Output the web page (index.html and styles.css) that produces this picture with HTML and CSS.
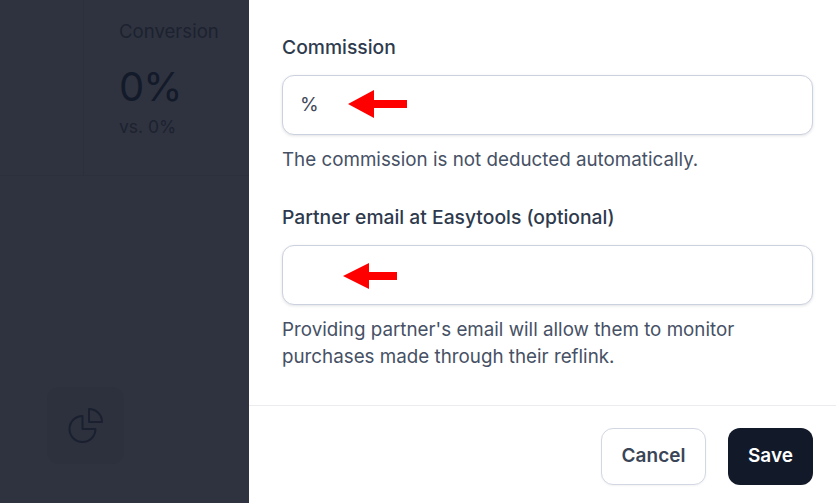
FILE: index.html
```html
<!DOCTYPE html>
<html lang="en">
<head>
<meta charset="utf-8">
<title>Commission</title>
<link rel="stylesheet" href="styles.css">
</head>
<body>
<div class="page">
  <aside class="backdrop">
    <section class="stats">
      <div class="stat-gap"></div>
      <div class="stat">
        <div class="stat-title">Conversion</div>
        <div class="stat-value">0%</div>
        <div class="stat-sub">vs. 0%</div>
      </div>
    </section>
    <div class="empty">
      <div class="empty-icon">
        <svg width="36" height="36" viewBox="0 0 36 36" fill="none" stroke="#1a2030" stroke-width="2" stroke-linejoin="round" stroke-linecap="round">
          <path d="M14.5 8A13 13 0 1 0 27.5 21H14.5z"/>
          <path d="M21 1A13 13 0 0 1 34 14H21z"/>
        </svg>
      </div>
    </div>
  </aside>
  <main class="panel">
    <form class="form">
      <div class="field">
        <label class="label">Commission</label>
        <div class="input"><span class="suffix">%</span>
          <svg class="arrow arrow-one" width="62" height="30" viewBox="0 0 62 30"><path d="M1 15 27 1v10h33v8H27v10z" fill="#fe0000"/></svg>
        </div>
        <p class="hint">The commission is not deducted automatically.</p>
      </div>
      <div class="field">
        <label class="label">Partner email at Easytools (optional)</label>
        <div class="input">
          <svg class="arrow arrow-two" width="56" height="28" viewBox="0 0 56 28"><path d="M1 14 27 1v9h28v8H27v9z" fill="#fe0000"/></svg>
        </div>
        <p class="hint">Providing partner's email will allow them to monitor purchases made through their reflink.</p>
      </div>
    </form>
    <footer class="footer">
      <button type="button" class="btn btn-cancel">Cancel</button>
      <button type="button" class="btn btn-save">Save</button>
    </footer>
  </main>
</div>
</body>
</html>
```
FILE: styles.css
```css
* { box-sizing: border-box; }
html, body { margin: 0; height: 100%; overflow: hidden; }
body { font-family: Inter, "Liberation Sans", sans-serif; background: #fff; }
.page { display: flex; width: 836px; height: 503px; }

.backdrop { width: 249px; flex: none; background: #2f333f; color: #1a2030; display: flex; flex-direction: column; overflow: hidden; }
.stats { display: flex; height: 176px; border-bottom: 1px solid #2c303c; flex: none; }
.stat-gap { width: 84px; border-right: 1px solid #2c303c; flex: none; }
.stat { padding: 19px 0 0 35px; }
.stat-title { font-size: 18.6px; line-height: 24px; color: #1c2230; }
.stat-value { font-size: 40px; line-height: 48px; margin-top: 20px; letter-spacing: -1px; color: #131a2a; }
.stat-sub { font-size: 17.5px; line-height: 24px; margin-top: 4px; color: #1c2230; }
.empty { padding: 211px 0 0 47px; }
.empty-icon { width: 77px; height: 77px; border-radius: 12px; background: #2d313d; display: flex; align-items: center; justify-content: center; }

.panel { flex: 1; display: flex; flex-direction: column; min-width: 0; }
.form { flex: 1; padding: 35px 23px 0 33px; display: flex; flex-direction: column; gap: 32px; }
.label { display: block; font-size: 19.3px; line-height: 24px; font-weight: 520; color: #2e3a4d; }
.input { position: relative; height: 60px; margin-top: 16px; border: 1px solid #ccd1df; border-radius: 12px; background: #fff; box-shadow: 0 1px 3px rgba(16,24,40,.12); display: flex; align-items: center; padding: 0 0 2px 17px; }
.suffix { font-size: 19px; color: #3f4858; }
.arrow { position: absolute; }
.arrow-one { left: 64px; top: 13px; }
.arrow-two { left: 59px; top: 16px; }
.hint { margin: 11px 0 0; font-size: 18.8px; line-height: 27px; color: #465165; }
.footer { flex: none; height: 98px; border-top: 1px solid #eaecf0; padding: 22px 23px 0 0; display: flex; justify-content: flex-end; align-items: flex-start; gap: 22px; }
.btn { height: 57px; border-radius: 12px; padding: 0 0 3px; font: 600 19px Inter, "Liberation Sans", sans-serif; }
.btn-cancel { width: 105px; background: #fff; border: 1px solid #d3d7e3; color: #3a4658; box-shadow: 0 1px 2px rgba(16,24,40,.05); }
.btn-save { width: 85px; background: #121a2a; border: 0; color: #fff; }
```
